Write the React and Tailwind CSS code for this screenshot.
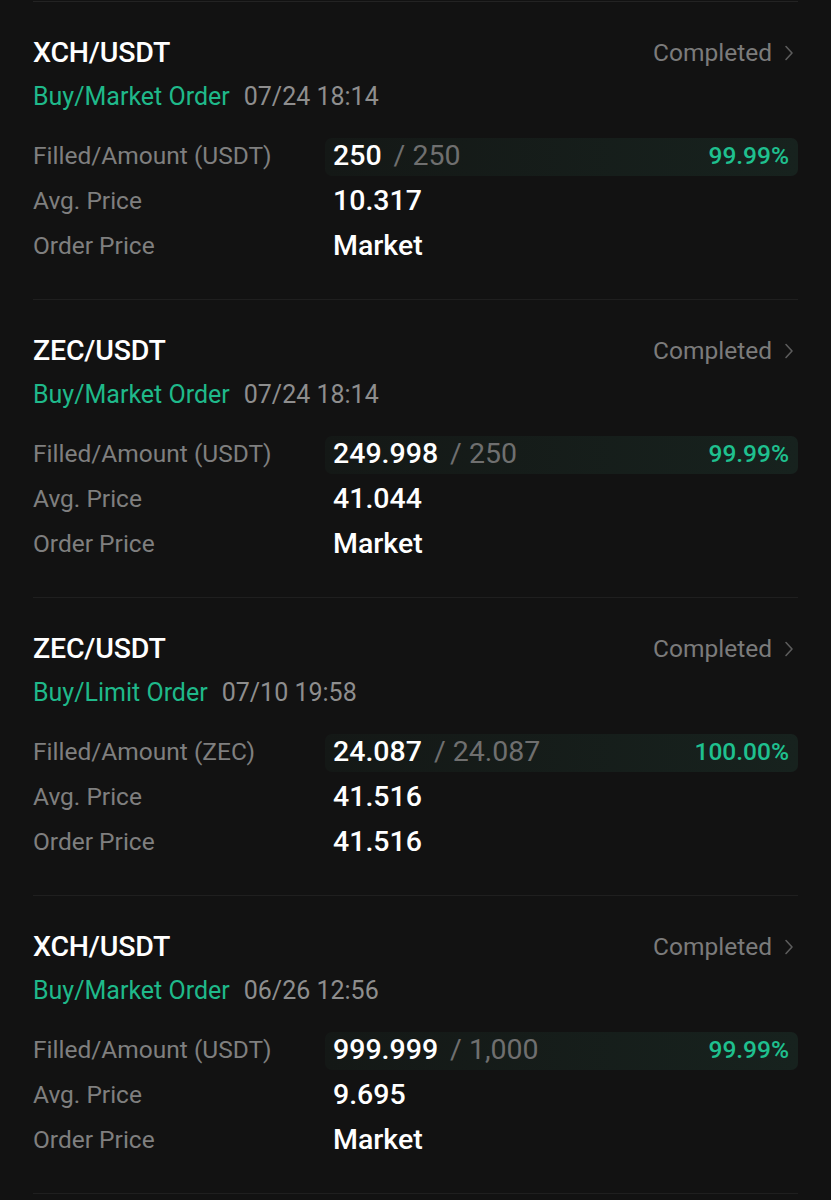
import React from "react";

const orders = [
  {
    pair: "XCH/USDT",
    side: "Buy/Market Order",
    time: "07/24 18:14",
    unit: "USDT",
    filled: "250",
    amount: "250",
    pct: "99.99%",
    avg: "10.317",
    price: "Market",
  },
  {
    pair: "ZEC/USDT",
    side: "Buy/Market Order",
    time: "07/24 18:14",
    unit: "USDT",
    filled: "249.998",
    amount: "250",
    pct: "99.99%",
    avg: "41.044",
    price: "Market",
  },
  {
    pair: "ZEC/USDT",
    side: "Buy/Limit Order",
    time: "07/10 19:58",
    unit: "ZEC",
    filled: "24.087",
    amount: "24.087",
    pct: "100.00%",
    avg: "41.516",
    price: "41.516",
  },
  {
    pair: "XCH/USDT",
    side: "Buy/Market Order",
    time: "06/26 12:56",
    unit: "USDT",
    filled: "999.999",
    amount: "1,000",
    pct: "99.99%",
    avg: "9.695",
    price: "Market",
  },
];

const Chevron = () => (
  <svg width="10" height="18" viewBox="0 0 10 18" fill="none" className="ml-[12px]">
    <path d="M2 2.5 L8 9 L2 15.5" stroke="#5c5c5c" strokeWidth="1.6" strokeLinecap="round" strokeLinejoin="round" />
  </svg>
);

const OrderCard = ({ o }) => (
  <div className="pt-[35px] pb-[30px]">
    {/* header */}
    <div className="flex h-[32px] items-center justify-between">
      <span className="text-[28.5px] font-medium tracking-[-0.2px] text-white">{o.pair}</span>
      <span className="flex items-center pr-[4px] text-[24.5px] text-[#7b7b7b]">
        Completed
        <Chevron />
      </span>
    </div>
    <div className="mt-[13px] flex h-[30px] items-center text-[25px]">
      <span className="text-[#1fb98a]">{o.side}</span>
      <span className="ml-[14px] text-[#8e8e8e]">{o.time}</span>
    </div>

    {/* details */}
    <div className="mt-[22px]">
      <div className="flex h-[45px] items-center">
        <span className="w-[292px] text-[24.5px] text-[#7f7f7f]">Filled/Amount ({o.unit})</span>
        <div className="flex h-[38px] flex-1 items-center justify-between rounded-[7px] bg-gradient-to-r from-[#141816] to-[#17221e] pl-[8px] pr-[9px]">
          <span className="text-[28.5px]">
            <span className="font-medium text-white">{o.filled}</span>
            <span className="ml-[12px] text-[#6f6f6f]">/ {o.amount}</span>
          </span>
          <span className="text-[24.5px] font-medium text-[#1fc08f]">{o.pct}</span>
        </div>
      </div>
      <div className="flex h-[45px] items-center">
        <span className="w-[300px] text-[24.5px] text-[#7f7f7f]">Avg. Price</span>
        <span className="text-[28.5px] font-medium text-white">{o.avg}</span>
      </div>
      <div className="flex h-[45px] items-center">
        <span className="w-[300px] text-[24.5px] text-[#7f7f7f]">Order Price</span>
        <span className="text-[28.5px] font-medium text-white">{o.price}</span>
      </div>
    </div>
  </div>
);

export default function App() {
  return (
    <div
      className="min-h-[1200px] w-[831px] bg-[#121212] px-[33px] pt-px"
      style={{ fontFamily: "Roboto, 'Noto Sans', sans-serif" }}
    >
      <div className="h-px bg-[#232323]" />
      {orders.map((o, i) => (
        <div key={i}>
          <OrderCard o={o} />
          <div className="h-px bg-[#1f1f1f]" />
        </div>
      ))}
    </div>
  );
}
